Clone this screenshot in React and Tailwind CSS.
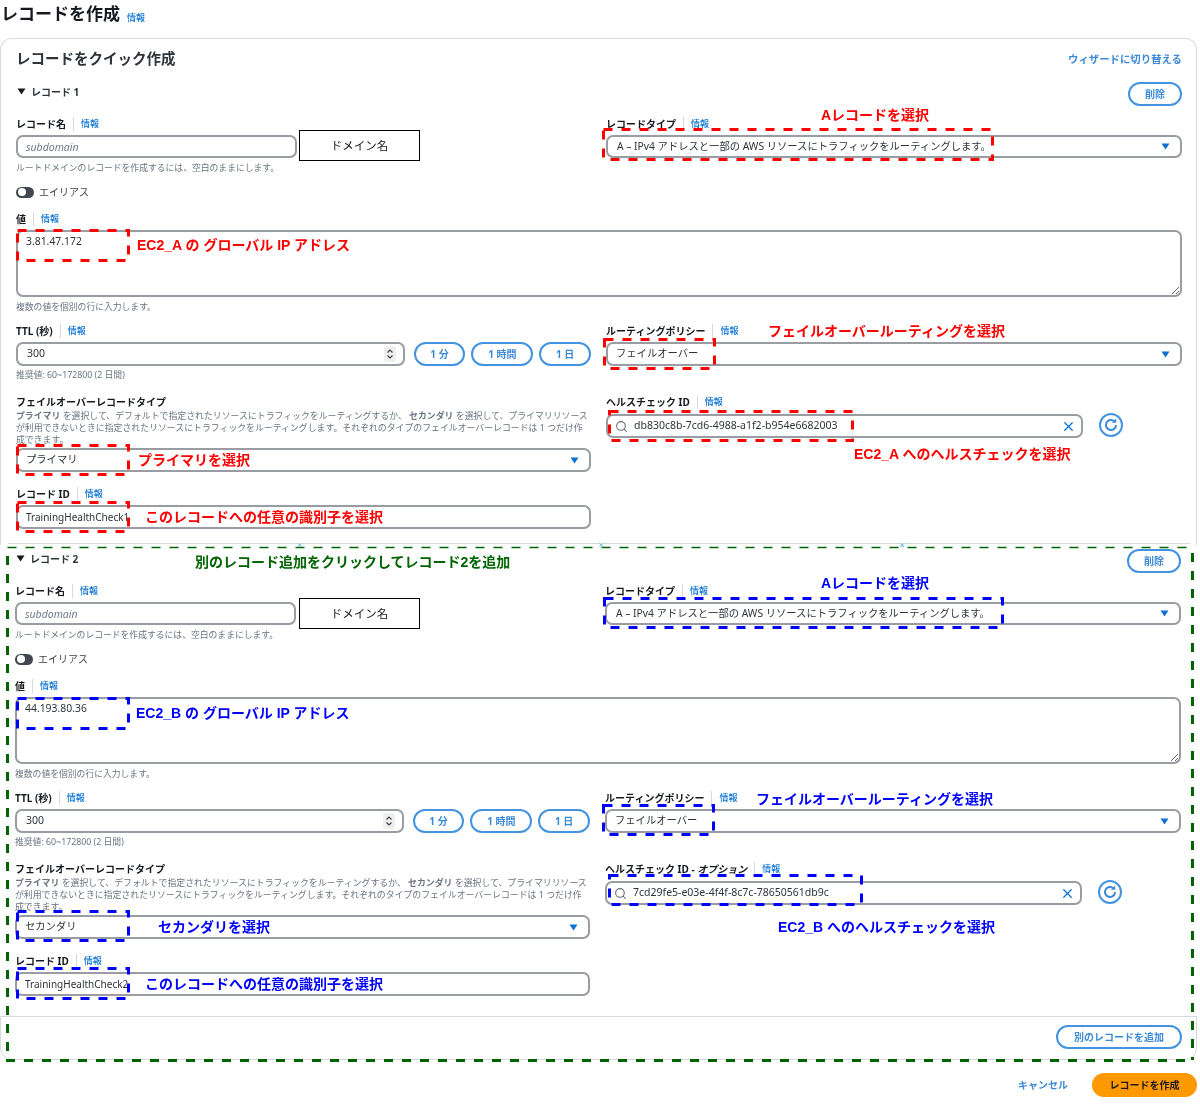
import { Search, X } from 'lucide-react';

const RECORDS = [
  {
    name: 'レコード 1',
    value: '3.81.47.172',
    failover: 'プライマリ',
    recordId: 'TrainingHealthCheck1',
    healthId: 'db830c8b-7cd6-4988-a1f2-b954e6682003',
    optional: false,
  },
  {
    name: 'レコード 2',
    value: '44.193.80.36',
    failover: 'セカンダリ',
    recordId: 'TrainingHealthCheck2',
    healthId: '7cd29fe5-e03e-4f4f-8c7c-78650561db9c',
    optional: true,
  },
];

const box = 'rounded-[7px] border-2 border-[#9a9ca3] bg-white flex items-center text-[#2f343b]';

function Label({ children }) {
  return (
    <div className="h-[16px] flex items-center">
      <span className="text-[10px] font-bold text-[#16191f] whitespace-nowrap">{children}</span>
      <span className="mx-[7px] h-[14px] w-px bg-[#d5dbdb]" />
      <a className="text-[9px] font-medium text-[#0972d3]">情報</a>
    </div>
  );
}

function Help({ children }) {
  return <div className="h-[12px] leading-[12px] mt-[4px] text-[8.8px] text-[#6b7480] whitespace-nowrap">{children}</div>;
}

function Caret() {
  return (
    <svg width="9" height="7" viewBox="0 0 9 7" className="shrink-0">
      <path d="M0.5 0.5h8L4.5 6.5z" fill="#0972d3" />
    </svg>
  );
}

function Select({ children }) {
  return (
    <div className={`${box} h-[24px] text-[10.3px] justify-between pl-[8px] pr-[10px]`}>
      <span className="whitespace-nowrap">{children}</span>
      <Caret />
    </div>
  );
}

function Pill({ className, children }) {
  return (
    <button className={`h-[24px] rounded-full border-2 border-[#4493e1] bg-white text-[10px] font-bold text-[#3b8ad8] flex items-center justify-center ${className}`}>
      {children}
    </button>
  );
}

function Stepper() {
  return (
    <div className="w-[12px] h-[16px] rounded-[3px] bg-[#efefef] flex items-center justify-center">
      <svg width="8" height="12" viewBox="0 0 8 12" fill="none" stroke="#3f444b" strokeWidth="1.2">
        <path d="M1.5 4.5L4 2l2.500 2.500M1.500 7.500L4 10l2.500-2.500" />
      </svg>
    </div>
  );
}

function RefreshButton() {
  return (
    <div className="w-[24px] h-[24px] ml-[16px] -mt-[3px] rounded-full border-2 border-[#4493e1] flex items-center justify-center shrink-0">
      <svg width="16" height="16" viewBox="0 0 16 16" fill="none" stroke="#3b8ad8" strokeWidth="2">
        <path d="M13 8a5 5 0 1 1-1.700-3.800" />
        <path d="M8.800 5.800h4.400V1.400z" fill="#3b8ad8" stroke="none" />
      </svg>
    </div>
  );
}

function Record({ record }) {
  return (
    <section>
      <div className="h-[24px] flex justify-between">
        <div className="flex items-center h-[20px] text-[10px] font-bold text-[#2f343b]">
          <svg width="9" height="7" viewBox="0 0 9 7" className="ml-[1px] mr-[5px] mb-[2px]">
            <path d="M0.5 0.5h8L4.5 6.5z" fill="#16191f" />
          </svg>
          {record.name}
        </div>
        <Pill className="w-[54px]">削除</Pill>
      </div>

      <div className="mt-[10px] grid grid-cols-[575px_576px] gap-x-[15px]">
        <div>
          <Label>レコード名</Label>
          <input
            readOnly
            placeholder="subdomain"
            className={`${box} mt-[3px] h-[23px] w-[281px] px-[8px] text-[10.5px] italic outline-none placeholder:text-[#707a85]`}
          />
          <Help>ルートドメインのレコードを作成するには、空白のままにします。</Help>
        </div>
        <div>
          <Label>レコードタイプ</Label>
          <div className={`${box} mt-[3px] h-[23px] text-[10.3px] justify-between pl-[9px] pr-[10px]`}>
            <span className="whitespace-nowrap">A – IPv4 アドレスと一部の AWS リソースにトラフィックをルーティングします。</span>
            <Caret />
          </div>
        </div>
      </div>

      <div className="mt-[12px] h-[12px] flex items-center text-[10px] text-[#3f444b]">
        <div className="w-[18px] h-[11px] rounded-full bg-[#414750] flex items-center pl-[1.5px] mr-[5px]">
          <div className="w-[8px] h-[8px] rounded-full bg-white" />
        </div>
        エイリアス
      </div>

      <div className="mt-[13px]">
        <Label>値</Label>
      </div>
      <textarea
        readOnly
        value={record.value}
        className="block mt-[3px] w-full h-[67px] rounded-[7px] border-2 border-[#9a9ca3] bg-white px-[8px] py-[2px] text-[10.400px] leading-[14px] text-[#2f343b] outline-none"
      />
      <Help>複数の値を個別の行に入力します。</Help>

      <div className="mt-[10px] grid grid-cols-[575px_576px] gap-x-[15px]">
        <div>
          <Label>TTL (秒)</Label>
          <div className="mt-[3px] flex">
            <div className={`${box} h-[24px] text-[10.5px] w-[390px] justify-between pl-[9px] pr-[7px]`}>
              300
              <Stepper />
            </div>
            <Pill className="w-[52px] ml-[9px]">1 分</Pill>
            <Pill className="w-[62px] ml-[6px]">1 時間</Pill>
            <Pill className="w-[52px] ml-[6px]">1 日</Pill>
          </div>
          <div className="-mt-[1px]">
            <Help>推奨値: 60~172800 (2 日間)</Help>
          </div>
        </div>
        <div>
          <Label>ルーティングポリシー</Label>
          <div className="mt-[3px]">
            <Select>フェイルオーバー</Select>
          </div>
        </div>
      </div>

      <div className="mt-[14px] grid grid-cols-[575px_576px] gap-x-[15px]">
        <div>
          <div className="h-[15px] leading-[15px] text-[10px] font-bold text-[#16191f]">フェイルオーバーレコードタイプ</div>
          <div className="text-[8.9px] leading-[12px] text-[#6b7480] whitespace-nowrap">
            <b>プライマリ</b> を選択して、デフォルトで指定されたリソースにトラフィックをルーティングするか、 <b>セカンダリ</b> を選択して、プライマリリソース
            <br />
            が利用できないときに指定されたリソースにトラフィックをルーティングします。それぞれのタイプのフェイルオーバーレコードは 1 つだけ作
            <br />
            成できます。
          </div>
          <div className="mt-[2px]">
            <Select>{record.failover}</Select>
          </div>
          <div className="mt-[14px]">
            <Label>レコード ID</Label>
          </div>
          <div className={`${box} h-[24px] text-[10px] mt-[3px] px-[8px] whitespace-nowrap`}>{record.recordId}</div>
        </div>
        <div>
          <div className="-mt-[1px]">
            <Label>
              ヘルスチェック ID{record.optional && <i> - オプション</i>}
            </Label>
          </div>
          <div className="mt-[4px] flex items-center">
            <div className={`${box} h-[24px] text-[10.5px] w-[477px] pl-[7px] pr-[5px]`}>
              <Search size={13} className="text-[#687078] shrink-0" strokeWidth={2} />
              <span className="ml-[6px] grow whitespace-nowrap">{record.healthId}</span>
              <X size={15} className="text-[#0972d3] shrink-0" strokeWidth={2} />
            </div>
            <RefreshButton />
          </div>
        </div>
      </div>
    </section>
  );
}

function Note({ className, children }) {
  return <div className={`absolute h-[16px] leading-[16px] text-[14px] font-bold whitespace-nowrap font-['Liberation_Sans','Noto_Sans_CJK_JP',sans-serif] ${className}`}>{children}</div>;
}

function Annotations() {
  return (
    <>
      <div className="absolute left-[299px] top-[130px] w-[121px] h-[31px] border border-black bg-white flex items-center justify-center text-[11.5px] text-[#16191f]">ドメイン名</div>
      <div className="absolute left-[299px] top-[598px] w-[121px] h-[31px] border border-black bg-white flex items-center justify-center text-[11.5px] text-[#16191f]">ドメイン名</div>

      <svg width="1200" height="1105" fill="none" strokeWidth="3" strokeDasharray="9 9" className="absolute left-0 top-0 pointer-events-none">
        <g stroke="#ff0000">
          <rect x="603.5" y="129.5" width="389" height="30" />
          <rect x="17.5" y="230.5" width="111" height="30" />
          <rect x="604.5" y="339.5" width="110" height="29" />
          <rect x="609.5" y="411.5" width="243" height="29" />
          <rect x="17.5" y="445.5" width="111" height="29" />
          <rect x="17.5" y="502.5" width="111" height="29" />
        </g>
        <g stroke="#0000ff">
          <rect x="604.5" y="598.5" width="398" height="29" />
          <rect x="17.5" y="698.5" width="111" height="30" />
          <rect x="603.5" y="805.5" width="110" height="29" />
          <rect x="609.5" y="875.5" width="252" height="29" />
          <rect x="17.5" y="911.5" width="111" height="29" />
          <rect x="17.5" y="968.5" width="111" height="30" />
        </g>
        <g stroke="#006400">
          <path d="M7.5 547.5H1193" strokeWidth="1.5" />
          <path d="M7.5 556V1060M1192.5 553V1060" />
          <path d="M6 1060.5H1194" />
        </g>
        <g stroke="#55b8ea" strokeWidth="1" strokeDasharray="none">
          <path d="M298 543.5l3.5 3.5m0-3.5l-3.5 3.5M599.500 543.500l3.500 3.500m0-3.500l-3.500 3.500M900.500 543.500l3.500 3.500m0-3.500l-3.500 3.500" />
        </g>
      </svg>

      <Note className="left-[821px] top-[107px] text-[#ff0000]">Aレコードを選択</Note>
      <Note className="left-[137px] top-[237px] text-[#ff0000]">EC2_A の グローバル IP アドレス</Note>
      <Note className="left-[768px] top-[323px] text-[#ff0000]">フェイルオーバールーティングを選択</Note>
      <Note className="left-[138px] top-[452px] text-[#ff0000]">プライマリを選択</Note>
      <Note className="left-[145px] top-[509px] text-[#ff0000]">このレコードへの任意の識別子を選択</Note>
      <Note className="left-[854px] top-[446px] text-[#ff0000]">EC2_A へのヘルスチェックを選択</Note>
      <Note className="left-[195px] top-[554px] text-[#006400]">別のレコード追加をクリックしてレコード2を追加</Note>
      <Note className="left-[821px] top-[575px] text-[#0000ff]">Aレコードを選択</Note>
      <Note className="left-[136px] top-[705px] text-[#0000ff]">EC2_B の グローバル IP アドレス</Note>
      <Note className="left-[756px] top-[791px] text-[#0000ff]">フェイルオーバールーティングを選択</Note>
      <Note className="left-[158px] top-[919px] text-[#0000ff]">セカンダリを選択</Note>
      <Note className="left-[145px] top-[976px] text-[#0000ff]">このレコードへの任意の識別子を選択</Note>
      <Note className="left-[778px] top-[919px] text-[#0000ff]">EC2_B へのヘルスチェックを選択</Note>
    </>
  );
}

export default function App() {
  return (
    <div className="relative w-[1200px] h-[1105px] bg-white overflow-hidden blur-[0.35px] font-['Noto_Sans','Noto_Sans_CJK_JP',sans-serif]">
      <div className="w-[1197px]">
        <div className="h-[38px] pl-[1px] flex items-start">
          <h1 className="h-[28px] leading-[28px] text-[17px] font-bold text-[#16191f]">レコードを作成</h1>
          <a className="ml-[7px] mt-[11px] text-[9px] font-medium leading-[14px] text-[#0972d3]">情報</a>
        </div>

        {/* first half of the card */}
        <div className="h-[507px] rounded-t-[12px] border-x border-t border-[#d5dbdb] px-[15px] pr-[14px]">
          <div className="h-[43px] pt-[9px] flex justify-between">
            <h2 className="h-[21px] leading-[21px] text-[14.5px] font-bold text-[#2f343b]">レコードをクイック作成</h2>
            <a className="h-[21px] mt-[1px] leading-[21px] text-[10.4px] font-bold text-[#3b8ad8]">ウィザードに切り替える</a>
          </div>
          <Record record={RECORDS[0]} />
          <div className="mt-[14px] -mx-[8px] h-px bg-[#d5dbdb]" />
        </div>

        {/* second record sits on a plain white block */}
        <div className="h-[471px] pt-[4px] pl-[15px] pr-[16px] bg-white">
          <Record record={RECORDS[1]} />
        </div>

        <div className="h-[44px] pb-[2px] rounded-b-[12px] border border-[#d5dbdb] pr-[14px] flex items-center justify-end">
          <Pill className="w-[126px]">別のレコードを追加</Pill>
        </div>

        <div className="mt-[13px] flex items-center justify-end">
          <a className="text-[10px] font-bold text-[#3b8ad8] mr-[24px]">キャンセル</a>
          <button className="w-[105px] h-[24px] rounded-full bg-[#ff9900] text-[10px] font-bold text-[#16191f]">レコードを作成</button>
        </div>
      </div>

      <Annotations />
    </div>
  );
}
